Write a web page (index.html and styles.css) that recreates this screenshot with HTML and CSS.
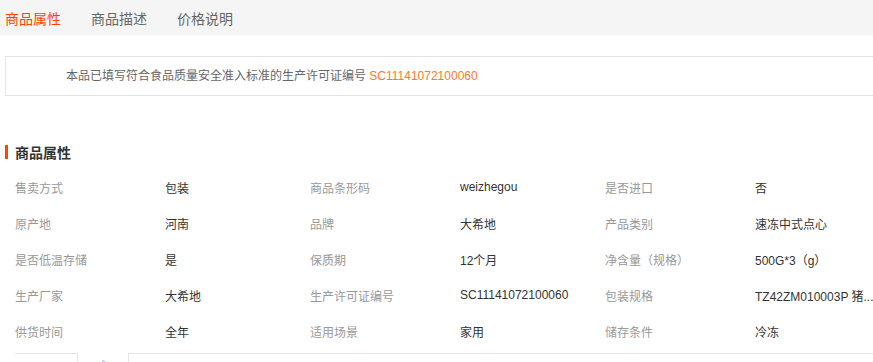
FILE: index.html
```html
<!DOCTYPE html>
<html lang="zh-CN">
<head>
  <meta charset="UTF-8">
  <meta name="viewport" content="width=device-width, initial-scale=1.0">
  <title>商品详情</title>
  <link rel="stylesheet" href="styles.css">
</head>
<body>
  <div class="tabs">
    <a class="tab active">商品属性</a>
    <a class="tab">商品描述</a>
    <a class="tab">价格说明</a>
  </div>

  <div class="notice">
    本品已填写符合食品质量安全准入标准的生产许可证编号 <span class="code">SC11141072100060</span>
  </div>

  <h3 class="section-title">商品属性</h3>
  <div class="attrs">
    <span class="label">售卖方式</span><span class="value">包装</span>
    <span class="label">商品条形码</span><span class="value">weizhegou</span>
    <span class="label">是否进口</span><span class="value">否</span>

    <span class="label">原产地</span><span class="value">河南</span>
    <span class="label">品牌</span><span class="value">大希地</span>
    <span class="label">产品类别</span><span class="value">速冻中式点心</span>

    <span class="label">是否低温存储</span><span class="value">是</span>
    <span class="label">保质期</span><span class="value">12个月</span>
    <span class="label">净含量（规格）</span><span class="value">500G*3（g）</span>

    <span class="label">生产厂家</span><span class="value">大希地</span>
    <span class="label">生产许可证编号</span><span class="value">SC11141072100060</span>
    <span class="label">包装规格</span><span class="value">TZ42ZM010003P 猪...</span>

    <span class="label">供货时间</span><span class="value">全年</span>
    <span class="label">适用场景</span><span class="value">家用</span>
    <span class="label">储存条件</span><span class="value">冷冻</span>
  </div>

  <div class="toggle">
    <div class="toggle-line short"></div>
    <div class="toggle-btn">
      <svg width="9" height="5" viewBox="0 0 9 5"><path d="M0.5 4.5 L4.5 0.8 L8.5 4.5" fill="none" stroke="#8a9bb0" stroke-width="1"/></svg>
    </div>
    <div class="toggle-line"></div>
  </div>
</body>
</html>
```

FILE: styles.css
```css
html, body {
  overflow: hidden;
}
body {
  margin: 0;
  font-family: "Liberation Sans", "Noto Sans CJK SC", sans-serif;
  font-size: 12px;
  color: #333;
  background: white;
  width: 960px;
}
.tabs {
  display: flex;
  gap: 30px;
  height: 35px;
  align-items: center;
  padding-left: 5px;
  background: #f5f5f5;
}
.tab {
  font-size: 14px;
  color: #666;
  cursor: pointer;
}
.tab.active {
  color: #ff4400;
}
.notice {
  margin: 21px 0 0 5px;
  height: 38px;
  line-height: 38px;
  padding-left: 60px;
  border: 1px solid #e5e5e5;
  color: #666;
}
.code {
  color: #ff7a1a;
}
.section-title {
  display: flex;
  align-items: center;
  gap: 7px;
  margin: 46px 0 0 5px;
  height: 20px;
  font-size: 14px;
  color: #333;
}
.section-title::before {
  content: "";
  width: 3px;
  height: 14px;
  background: #ff4400;
}
.attrs {
  display: grid;
  grid-template-columns: 150px 145px 150px 145px 150px 145px;
  grid-auto-rows: 36px;
  align-items: center;
  margin-top: 7px;
  padding-left: 15px;
}
.label {
  color: #999;
}
.value {
  color: #333;
  white-space: nowrap;
}
.toggle {
  display: flex;
  margin: 4px 0 0 15px;
  height: 20px;
}
.toggle-line {
  flex: 1;
  border-top: 1px solid #e5e5e5;
}
.toggle-line.short {
  flex: none;
  width: 62px;
}
.toggle-btn {
  width: 50px;
  border-left: 1px solid #e5e5e5;
  border-right: 1px solid #e5e5e5;
  text-align: center;
  padding-top: 1px;
}
```
